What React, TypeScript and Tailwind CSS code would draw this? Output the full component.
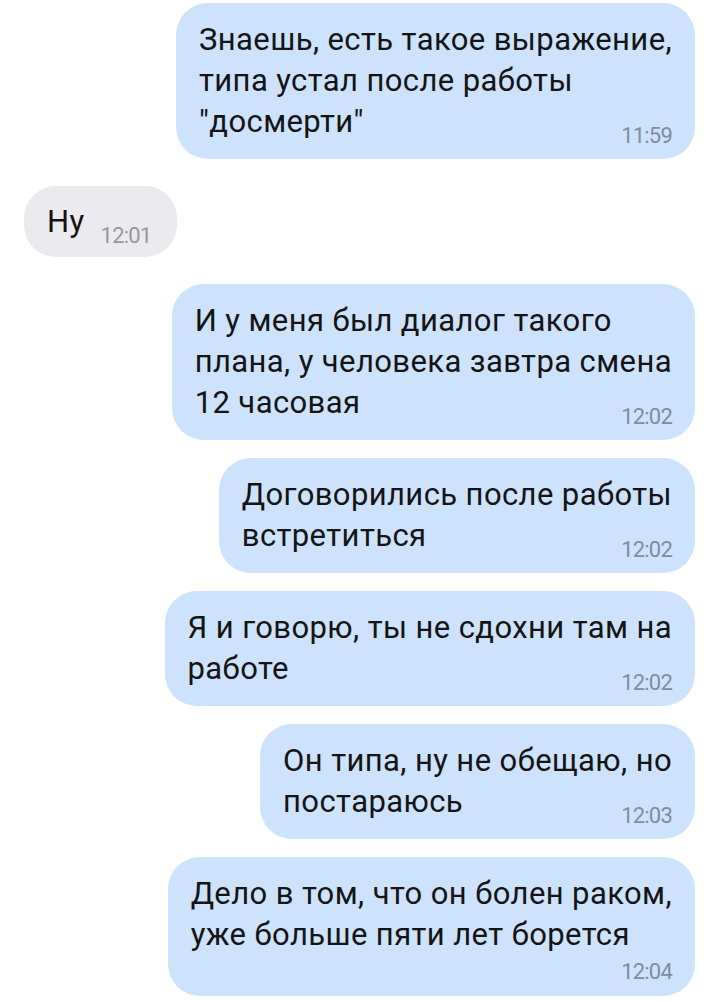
type Message = {
  id: number
  out: boolean
  lines: string[]
  time: string
  timeBelow?: boolean
}

const messages: Message[] = [
  { id: 1, out: true, lines: ["Знаешь, есть такое выражение,", "типа устал после работы", "\"досмерти\""], time: "11:59" },
  { id: 2, out: false, lines: ["Ну"], time: "12:01" },
  { id: 3, out: true, lines: ["И у меня был диалог такого", "плана, у человека завтра смена", "12 часовая"], time: "12:02" },
  { id: 4, out: true, lines: ["Договорились после работы", "встретиться"], time: "12:02" },
  { id: 5, out: true, lines: ["Я и говорю, ты не сдохни там на", "работе"], time: "12:02" },
  { id: 6, out: true, lines: ["Он типа, ну не обещаю, но", "постараюсь"], time: "12:03" },
  {
    id: 7,
    out: true,
    lines: ["Дело в том, что он болен раком,", "уже больше пяти лет борется"],
    time: "12:04",
    timeBelow: true,
  },
]

export default function App() {
  return (
    <div className="min-h-screen bg-white pt-[3px] pb-4 font-['Roboto',sans-serif]">
      <div className="flex flex-col">
        {messages.map((m, i) => {
          const prev = messages[i - 1]
          const switched = prev && prev.out !== m.out
          return (
            <div
              key={m.id}
              className={`flex ${m.out ? "justify-end pr-[25px]" : "justify-start pl-[24px]"} ${
                i === 0 ? "" : switched ? "mt-[27px]" : "mt-[18px]"
              }`}
            >
              <Bubble message={m} />
            </div>
          )
        })}
      </div>
    </div>
  )
}

function Bubble({ message }: { message: Message }) {
  const { out, lines, time, timeBelow } = message
  const timeColor = out ? "text-[#7d8da3]" : "text-[#98989d]"
  return (
    <div
      className={`rounded-[32px] pl-[23px] ${
        out ? "bg-[#cde2fc] pt-[16px] pb-[17px] pr-[23px]" : "bg-[#ebebef] pt-[15px] pb-[15px] pr-[26px]"
      }`}
    >
      <p className="whitespace-nowrap text-[31px] leading-[41px] tracking-[0.4px] text-[#141414]">
        {lines.map((line, idx) => (
          <span key={idx}>
            {line}
            {idx < lines.length - 1 && <br />}
          </span>
        ))}
        {!timeBelow && (
          <span
            className={`float-right relative top-[24px] ml-[16px] text-[22px] leading-[22px] tracking-[-0.8px] ${timeColor}`}
          >
            {time}
          </span>
        )}
      </p>
      {timeBelow && (
        <div className={`mt-[6px] -mb-[4px] text-right text-[22px] leading-[22px] tracking-[-0.8px] ${timeColor}`}>
          {time}
        </div>
      )}
    </div>
  )
}
